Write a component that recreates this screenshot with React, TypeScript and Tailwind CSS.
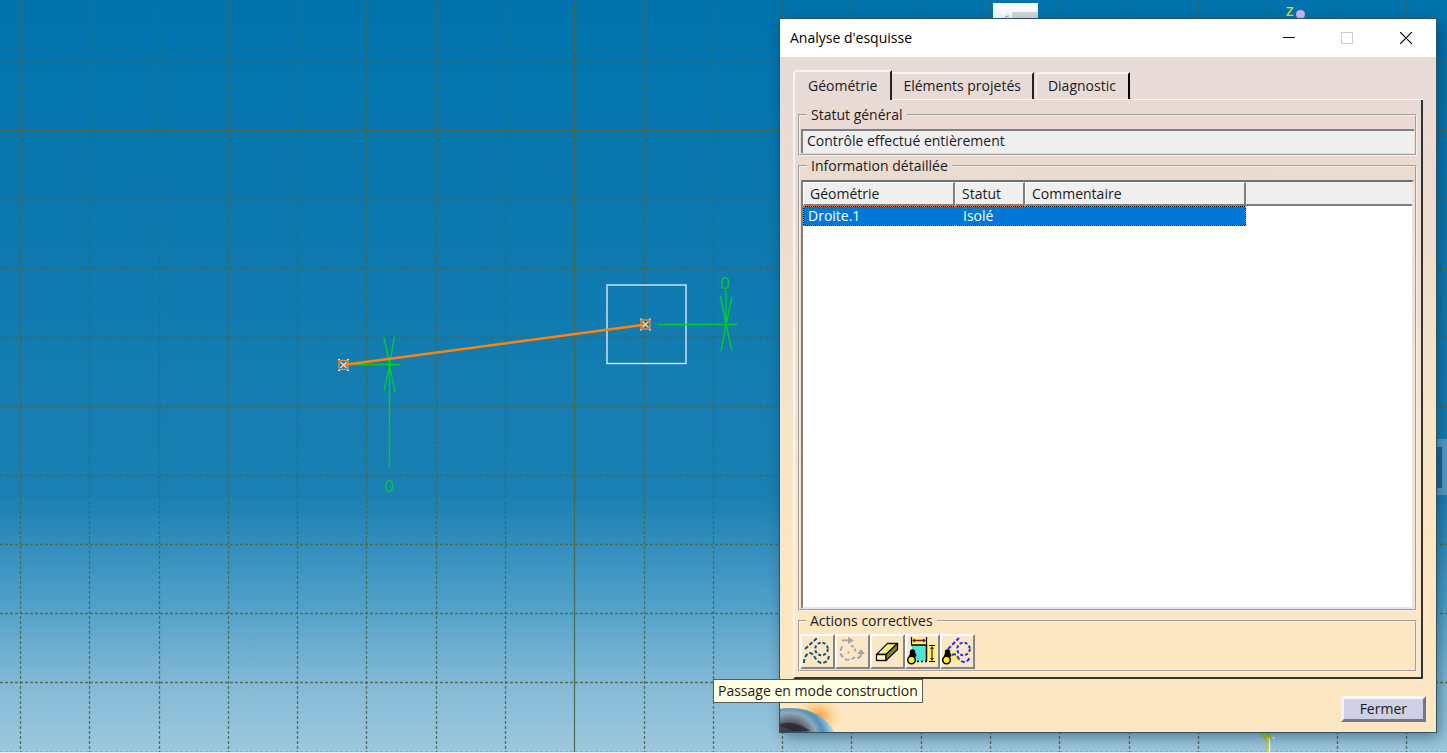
import { ReactNode } from "react";

const columns = Array.from({ length: 40 }, (_, i) => Math.floor(20.4 + i * 69.3) + 0.5);
const rows = Array.from({ length: 20 }, (_, i) => Math.floor(61 + i * 69.1) + 0.5);

function Endpoint({ x, y }: { x: number; y: number }) {
  return (
    <g>
      <rect x={x - 4.5} y={y - 4.5} width="9" height="9" fill="none" stroke="#f08c3a" strokeWidth="1.300" />
      <path d={`M${x - 3} ${y - 3}l6 6M${x + 3} ${y - 3}l-6 6`} stroke="#ffcf9e" strokeWidth="1.500" />
      <path
        d={`M${x - 5.5} ${y - 5.5}h2M${x + 3.5} ${y - 5.5}h2M${x - 5.5} ${y + 5.5}h2M${x + 3.5} ${y + 5.5}h2`}
        stroke="#dfeaf2"
      />
    </g>
  );
}

function SketchCanvas() {
  return (
    <svg className="absolute inset-0 h-full w-full" aria-hidden="true">
      <g stroke="#4a6748" strokeWidth="1.300" strokeOpacity="0.900">
        {columns.map((x, i) => (
          <line key={x} x1={x} x2={x} y1="1" y2="100%" strokeDasharray={i % 10 === 8 ? undefined : "3 2"} />
        ))}
        {rows.map((y, i) => (
          <line key={y} x1="0" x2="100%" y1={y} y2={y} strokeDasharray={i % 10 === 1 ? undefined : "3 2"} />
        ))}
      </g>

      <rect x="607" y="285" width="79" height="78.500" fill="none" stroke="#e4f1f8" strokeWidth="1.300" />

      <g stroke="#00cc2c" strokeWidth="1.400" fill="none">
        <path d="M351 364.500H400M389.500 364V467M384 337L389.500 365L395 392M394.500 337L389.500 365L384 391" />
        <path d="M658 324.500H738M726 290V325M720.500 296L726 324.500L732 351M732 297L726 324.500L721 351" />
      </g>
      <g fill="#00cc2c" fontFamily="'Open Sans', sans-serif" fontSize="17" textAnchor="middle">
        <text x="389" y="492">0</text>
        <text x="725" y="289">0</text>
      </g>

      <line x1="343" y1="365" x2="646" y2="324.500" stroke="#ff820d" strokeWidth="2.400" />
      <Endpoint x={343.5} y={365} />
      <Endpoint x={645.5} y={324.5} />

      <rect x="993" y="3" width="45" height="20" fill="#fafafa" />
      <rect x="1012" y="12" width="26" height="10" fill="#d6d6d6" />
      <path d="M1005 19c0-2 1-3 4-3" stroke="#999" fill="none" />

      <text x="1286" y="16" fill="#e0e010" fontFamily="'Open Sans', sans-serif" fontSize="13" fontWeight="600">
        Z
      </text>
      <circle cx="1300.500" cy="14.500" r="4.500" fill="#cdb6ea" />

      <path d="M1267.500 732V752" stroke="#d8d800" strokeWidth="2" />
      <path d="M1269.500 738V752M1269 738H1275" stroke="#f4f6ec" strokeWidth="1.500" />
      <path d="M1261 733l4 5 3-4 4 5M1263 733h10" stroke="#bcc400" strokeWidth="2" fill="none" />

      <path d="M1430 439h17v8h-17z M1430 488h17v7h-17z M1442 447h5v41h-5z" fill="#76a9cf" fillOpacity="0.700" />
      <rect x="1430" y="447" width="12" height="41" fill="#1668a4" />
    </svg>
  );
}

function ConstructionIcon() {
  return (
    <svg viewBox="0 0 31 31" className="size-[31px]" fill="none" stroke="#125482" strokeWidth="2">
      <path d="M3 13L15 2" strokeDasharray="4 2" />
      <circle cx="19.500" cy="13" r="6.300" strokeDasharray="3 2" />
      <path d="M2 27C2 21 5 17 8 17C12 17 13 25 19 27C25 27 26 24 27 20" strokeDasharray="4 2" />
    </svg>
  );
}

function RotateIcon() {
  return (
    <svg viewBox="0 0 31 31" className="size-[31px]" fill="none">
      <g stroke="#fff" strokeWidth="1.500" transform="translate(1 1)">
        <path d="M5 10A8 8 0 1 0 18 21M5 4.500H12" />
      </g>
      <g stroke="#a6a6a6" strokeWidth="2">
        <path d="M5.500 10.500A8 8 0 1 0 18 21" strokeDasharray="5 2" />
        <path d="M14 9.500C17 10.500 18.500 13 18.500 17" strokeDasharray="3 2" />
        <path d="M5 4.500H12M20 22C23 22 24 20 24 17" />
      </g>
      <path d="M11 1L17 4.500L11 8zM20 18L24 13L28 18zM10.500 15.500h2v2h-2z" fill="#a6a6a6" />
    </svg>
  );
}

function EraserIcon() {
  return (
    <svg viewBox="0 0 31 31" className="size-[31px]" strokeLinejoin="round" stroke="#111" strokeWidth="1.300">
      <path d="M4.500 18.500L15.500 7.500H25.500L14 18.500z" fill="#f6f06a" />
      <path d="M4.500 18.500H14V24.500H4.500z" fill="#ffffd2" />
      <path d="M14 18.500L25.500 7.500V13.500L14 24.500z" fill="#8c8428" />
      <path d="M8 17L16 9.500" stroke="#fffde0" />
    </svg>
  );
}

function Figure() {
  return (
    <g>
      <circle cx="5.500" cy="16" r="2.700" fill="#000" />
      <path d="M3 17H8.500L9.500 20L7 22H3L2 20z" fill="#000" />
      <circle cx="4.500" cy="24" r="3.800" fill="#fff200" stroke="#000" strokeWidth="1.500" />
    </g>
  );
}

function DimensionIcon() {
  return (
    <svg viewBox="0 0 31 31" className="size-[31px]" fill="none">
      <path d="M4 1H20V8H28V26H4z" fill="#fdf26a" />
      <rect x="5" y="9" width="15" height="16" fill="#4fe6d8" />
      <path d="M4 9H19.500V25" stroke="#000" strokeWidth="1.500" />
      <path d="M10 25.500H20" stroke="#000" strokeWidth="1.500" strokeDasharray="2 2" />
      <path d="M4.500 1V8M19.500 1V8M22 9.500H28M22 25.500H28" stroke="#000" strokeWidth="1.200" />
      <path d="M6 4.500H18M25 12V24" stroke="#6e1d12" strokeWidth="1.300" />
      <path d="M5 4.500L8 2.500V6.500zM19 4.500L16 2.500V6.500zM25 10L23 13H27zM25 25L23 22H27z" fill="#6e1d12" />
      <Figure />
    </svg>
  );
}

function ConstructionElementsIcon() {
  return (
    <svg viewBox="0 0 31 31" className="size-[31px]" fill="none">
      <path d="M2 13H8L12 17L18 22V26H2z" fill="#ffef60" />
      <g stroke="#1c35e8" strokeWidth="2">
        <path d="M6 13L17 2" strokeDasharray="4 2" />
        <circle cx="21.500" cy="13" r="6.300" strokeDasharray="3 2" />
        <path d="M10 19C14 17 15 20 17 23C21 28 26 26 28 21" strokeDasharray="4 2" />
      </g>
      <Figure />
    </svg>
  );
}

function Planet() {
  return (
    <svg className="absolute bottom-0 left-0 h-[29px] w-[62px]" viewBox="0 0 62 29" aria-hidden="true">
      <defs>
        <radialGradient id="glow">
          <stop offset="0" stopColor="#ff9440" />
          <stop offset="0.3" stopColor="#fcb862" stopOpacity="0.900" />
          <stop offset="1" stopColor="#fdd98a" stopOpacity="0" />
        </radialGradient>
        <radialGradient id="globe" gradientUnits="userSpaceOnUse" cx="10" cy="37" r="42" gradientTransform="rotate(8 10 37)">
          <stop offset="0" stopColor="#2c2a30" />
          <stop offset="0.35" stopColor="#47464e" />
          <stop offset="0.5" stopColor="#6b7480" />
          <stop offset="0.65" stopColor="#8fa9ba" />
          <stop offset="0.8" stopColor="#4f90b8" />
          <stop offset="1" stopColor="#9ccbe0" />
        </radialGradient>
      </defs>
      <ellipse cx="38" cy="13" rx="24" ry="20" fill="url(#glow)" />
      <ellipse cx="10" cy="37" rx="45" ry="32" fill="url(#globe)" />
      <path d="M0 21C10 18 20 20 30 28H12C8 25 4 24 0 24z" fill="#26242a" opacity="0.700" />
    </svg>
  );
}

const tools: { label: string; icon: ReactNode; disabled?: boolean }[] = [
  { label: "Passage en mode construction", icon: <ConstructionIcon /> },
  { label: "Fermer le contour", icon: <RotateIcon />, disabled: true },
  { label: "Effacer", icon: <EraserIcon /> },
  { label: "Cacher les contraintes", icon: <DimensionIcon /> },
  { label: "Cacher la construction", icon: <ConstructionElementsIcon /> },
];

function Group({ title, className, children }: { title: string; className: string; children: ReactNode }) {
  return (
    <fieldset className={`min-w-0 border-2 border-[#f4f0ec] [border-style:groove] ${className}`}>
      <legend className="ml-1.5 px-1 leading-5">{title}</legend>
      {children}
    </fieldset>
  );
}

const headCell =
  "h-6 border-t border-r-2 border-b-2 border-l border-t-white border-r-[#808080] border-b-[#808080] border-l-white bg-[#efefef] pl-1.5 text-left font-normal";
const bodyCell = "h-5 border-y border-dotted border-[#e07a30] bg-[#0078d7] bg-clip-padding leading-[18px] text-white";

export default function App() {
  return (
    <main className="relative h-screen min-h-[480px] overflow-hidden border-b border-[#e8eef2] bg-[linear-gradient(#0073ac_0%,#1a80b3_66%,#4e9fc8_80%,#83b9d5_91%,#9dc8de_100%)] font-['Open_Sans','Noto_Sans',sans-serif] text-sm text-[#1c1a20]">
      <SketchCanvas />

      <section
        role="dialog"
        aria-labelledby="dialog-title"
        className="absolute top-[19px] right-[11px] bottom-5 flex w-[656px] flex-col bg-[linear-gradient(#e8dad6_0,#e8dad6_60px,#ecdccf_200px,#f6e5c9_400px,#fde6c2_560px)] shadow-[0_0_0_1px_#2c5468,3px_5px_14px_rgba(0,30,50,0.45)]"
      >
        <header className="flex h-[38px] shrink-0 items-center bg-white pl-[10px] text-black">
          <h1 id="dialog-title" className="flex-1">
            Analyse d'esquisse
          </h1>
          <button aria-label="Réduire" className="flex h-full w-[58px] items-center justify-center">
            <svg className="size-3" viewBox="0 0 12 12" shapeRendering="crispEdges">
              <path d="M0 5.500H12" stroke="#000" />
            </svg>
          </button>
          <button aria-label="Agrandir" disabled className="flex h-full w-[58px] items-center justify-center">
            <svg className="size-3" viewBox="0 0 12 12" shapeRendering="crispEdges">
              <rect x="0.500" y="0.500" width="11" height="11" fill="none" stroke="#ccc" />
            </svg>
          </button>
          <button aria-label="Fermer la fenêtre" className="flex h-full w-[60px] items-center justify-center">
            <svg className="size-3" viewBox="0 0 12 12">
              <path d="M0 0L12 12M12 0L0 12" stroke="#000" strokeWidth="1.200" />
            </svg>
          </button>
        </header>

        <div className="flex min-h-0 flex-1 flex-col px-[13px] pt-[13px]">
          <div role="tablist" className="flex h-[30px] shrink-0">
            <button
              role="tab"
              aria-selected="true"
              className="rounded-tl border-t-2 border-r-2 border-l-2 border-t-[#f8f3f0] border-r-[#222] border-l-[#f8f3f0] px-[13px]"
            >
              Géométrie
            </button>
            <div className="flex flex-1 border-b border-[#fbf7f4] pt-0.5">
              <button
                role="tab"
                aria-selected="false"
                className="border-t-2 border-r-2 border-t-[#f8f3f0] border-r-[#222] px-[11px] pb-px"
              >
                Eléments projetés
              </button>
              <button
                role="tab"
                aria-selected="false"
                className="ml-0.5 rounded-tl border-t-2 border-r-2 border-l border-t-[#f8f3f0] border-r-black border-l-[#f8f3f0] pr-3 pb-px pl-[11px]"
              >
                Diagnostic
              </button>
            </div>
          </div>

          <div
            role="tabpanel"
            className="flex min-h-0 flex-1 flex-col border-r-2 border-b-2 border-l-2 border-r-[#333] border-b-[#333] border-l-[#f8f3f0] pt-[5px] pr-1 pb-[5px] pl-[3px]"
          >
            <Group title="Statut général" className="shrink-0 px-px pt-1 pb-px">
              <input
                readOnly
                aria-label="Statut général"
                value="Contrôle effectué entièrement"
                className="block h-6 w-full border-t-2 border-l-2 border-[#808080] bg-[#efefef] pb-1 pl-1 outline-none"
              />
            </Group>

            <Group title="Information détaillée" className="flex min-h-0 flex-1 flex-col px-px pt-1">
              <div className="min-h-0 flex-1 overflow-hidden border-2 border-t-[#707070] border-r-[#e6e6e6] border-b-[#e6e6e6] border-l-[#808080] bg-white">
                <table className="w-full table-fixed border-separate border-spacing-0">
                  <thead>
                    <tr>
                      <th className={`${headCell} w-[152px]`}>Géométrie</th>
                      <th className={`${headCell} w-[70px]`}>Statut</th>
                      <th className={`${headCell} w-[221px]`}>Commentaire</th>
                      <td className="border-b-2 border-[#808080] bg-[#efefef]" />
                    </tr>
                  </thead>
                  <tbody>
                    <tr className="bg-black">
                      <td className={`${bodyCell} border-l pl-1`}>Droite.1</td>
                      <td className={`${bodyCell} pl-2`}>Isolé</td>
                      <td className={`${bodyCell} border-r`} />
                      <td className="bg-white" />
                    </tr>
                  </tbody>
                </table>
              </div>
            </Group>

            <Group title="Actions correctives" className="shrink-0 pt-[3px] pb-px">
              <div className="flex">
                {tools.map((tool) => (
                  <button
                    key={tool.label}
                    aria-label={tool.label}
                    disabled={tool.disabled}
                    className="flex size-[35px] items-center justify-center border-2 border-t-white border-r-[#858585] border-b-[#858585] border-l-white bg-[#fbe6c6]"
                  >
                    {tool.icon}
                  </button>
                ))}
              </div>
            </Group>
          </div>
        </div>

        <footer className="relative flex h-[53px] shrink-0 justify-end pt-[17px] pr-[10px]">
          <Planet />
          <button className="h-[26px] border-[3px] border-t-[#f8f8ff] border-r-[#74748e] border-b-[#74748e] border-l-[#f0f0ff] bg-[#cfcfe6] px-4 leading-5">
            Fermer
          </button>
        </footer>

        <div
          role="tooltip"
          className="absolute bottom-[29px] left-[-67px] border border-[#5a5a5a] bg-[#ffffe1] px-1 leading-[22px] whitespace-nowrap"
        >
          Passage en mode construction
        </div>
      </section>
    </main>
  );
}
